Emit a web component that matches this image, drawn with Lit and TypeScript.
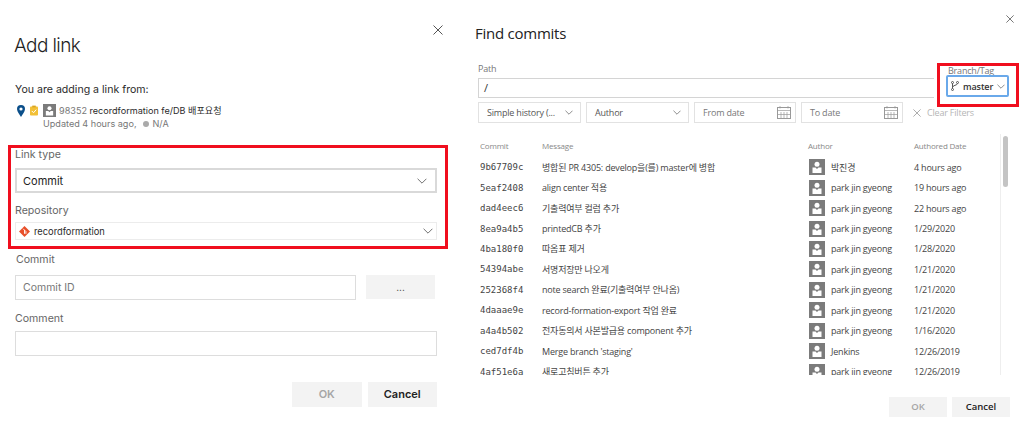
import { LitElement, html, css } from "lit";
import { customElement } from "lit/decorators.js";

const chevron = (w = 12) => html`<svg class="chev" width=${w} height=${Math.round(w * 0.6)} viewBox="0 0 12 7"><path d="M.7.8 6 6.100 11.300.8" fill="none" stroke="#555" stroke-width="1"/></svg>`;
const closeX = html`<svg width="10" height="10" viewBox="0 0 10 10"><path d="M.5.5l9 9M9.500.5l-9 9" stroke="#555" stroke-width="1" fill="none"/></svg>`;
const avatar = (s: number) => html`<svg class="avatar" width=${s} height=${s} viewBox="0 0 16 16"><rect width="16" height="16" fill="#7b7b7b"/><circle cx="8" cy="5.200" r="2.500" fill="#fff"/><path d="M3.500 8.600h3l1.500 1.400 1.500-1.400h3V14h-9z" fill="#fff"/></svg>`;
const calendar = html`<svg width="14" height="13" viewBox="0 0 14 13" fill="none" stroke="#999" stroke-width="1"><rect x=".5" y="1.500" width="13" height="11"/><path d="M.5 4.500h13M3 0v2.500M11 0v2.500M4 6v6M7 6v6M10 6v6M1 8.500h12" stroke-width=".7"/></svg>`;

const rows: [string, string, string, string][] = [
  ["9b67709c", "병합된 PR 4305: develop을(를) master에 병합", "박진경", "4 hours ago"],
  ["5eaf2408", "align center 적용", "park jin gyeong", "19 hours ago"],
  ["dad4eec6", "기출력여부 컬럼 추가", "park jin gyeong", "22 hours ago"],
  ["8ea9a4b5", "printedCB 추가", "park jin gyeong", "1/29/2020"],
  ["4ba180f0", "따옴표 제거", "park jin gyeong", "1/28/2020"],
  ["54394abe", "서명저장만 나오게", "park jin gyeong", "1/21/2020"],
  ["252368f4", "note search 완료(기출력여부 안나옴)", "park jin gyeong", "1/21/2020"],
  ["4daaae9e", "record-formation-export 작업 완료", "park jin gyeong", "1/21/2020"],
  ["a4a4b502", "전자동의서 사본발급용 component 추가", "park jin gyeong", "1/16/2020"],
  ["ced7df4b", "Merge branch 'staging'", "Jenkins", "12/26/2019"],
  ["4af51e6a", "새로고침버튼 추가", "park jin gyeong", "12/26/2019"],
];

@customElement("app-root")
export class AppRoot extends LitElement {
  static styles = css`
    :host { display: block; width: 1035px; height: 423px; position: relative; overflow: hidden; background: #fff; color: #2b2b2b; }
    * { box-sizing: border-box; }
    .page { display: flex; height: 423px; }
    .left { width: 460px; padding: 0 0 0 15px; font-family: "Inter", "Noto Sans CJK KR", sans-serif; font-size: 10.5px; position: relative; }
    .right { flex: 1; padding-left: 15px; font-family: "Open Sans", "Noto Sans CJK KR", sans-serif; font-size: 9px; letter-spacing: -.2px; position: relative; }
    .close { position: absolute; line-height: 0; }
    .left .close { left: 433px; top: 25px; }
    .right .close { left: 546px; top: 15px; width: 8px; }
    .right .close svg { width: 8px; height: 8px; }
    h1 { margin: 0; font-weight: 400; color: #222; }
    .left h1 { font-size: 19px; font-weight: 300; line-height: 26px; padding-top: 33px; margin-left: -1px; letter-spacing: -.6px; }
    .from { margin-top: 24px; font-size: 10.6px; line-height: 14px; }
    .item { display: flex; margin-top: 7px; }
    .item-icons { display: flex; align-items: center; height: 13px; }
    .pin { margin: 0 5px 0 2px; }
    .clip { margin-right: 5px; }
    .item-text { line-height: 13px; font-size: 9.1px; }
    .item-main { display: flex; align-items: center; gap: 3px; height: 13px; }
    .muted { color: #777; }
    .item-sub { display: flex; align-items: center; color: #777; }
    .dot { width: 6px; height: 6px; border-radius: 50%; background: #aaa; margin: 0 4px 0 6px; }
    .lab { color: #666; font-size: 10.6px; line-height: 14px; }
    .lab-type { margin-top: 18px; }
    .lab-repo { margin-top: 11px; }
    .lab-commit { margin-top: 13px; padding-left: 1px; }
    .lab-comment { margin-top: 12px; }
    .sel { display: flex; align-items: center; justify-content: space-between; width: 422px; border: 1px solid #ddd; background: #fff; }
    .sel.type { height: 25px; margin-top: 6px; padding: 0 8px 0 6px; font-size: 11px; color: #222; border: 2px solid #d9d9d9; }
    .sel.repo { height: 18px; margin-top: 4px; padding: 0 3px 0 3px; border-color: #ececec; }
    .repo-name { display: flex; align-items: center; gap: 4px; font-size: 9.3px; }
    .inrow { display: flex; gap: 10px; margin-top: 8px; }
    .inp { height: 25px; border: 1px solid #ddd; display: flex; align-items: center; padding-left: 7px; color: #777; }
    .inp.id { width: 341px; }
    .dots { width: 69px; height: 24px; background: #f3f3f3; text-align: center; line-height: 24px; color: #444; font-size: 10px; }
    .inp.comment { width: 422px; margin-top: 5px; }
    .actions { display: flex; justify-content: flex-end; }
    .left .actions { width: 422px; gap: 6px; margin-top: 26px; }
    .left .btn { width: 69.5px; height: 25px; line-height: 25px; font-size: 11px; }
    .btn { background: #f3f3f3; text-align: center; font-weight: 600; color: #222; }
    .btn.off { color: #a6a6a6; }
    .right h1 { font-size: 15px; line-height: 20px; padding-top: 23px; letter-spacing: -.25px; }
    .path-row { display: flex; margin-top: 14px; padding-left: 3px; }
    .path-col { width: 456px; }
    .plab { color: #777; font-size: 9px; line-height: 12px; margin-top: 6px; }
    .path { height: 20px; margin-top: 3px; border: 1px solid #d4d4d4; padding-left: 5px; line-height: 18px; font-size: 11px; color: #333; border-right: 0; }
    .branch-col { position: relative; margin-left: 12px; width: 63px; }
    .branch-lab { position: absolute; left: 2px; top: 8px; color: #777; font-size: 9px; line-height: 12px; white-space: nowrap; }
    .branch { position: absolute; left: 0; top: 18px; width: 63px; height: 22px; border: 2px solid #6aa9ea; border-radius: 2px; display: flex; align-items: center; gap: 4px; padding-left: 3px; color: #333; font-size: 9px; font-weight: 600; letter-spacing: -.1px; }
    .filters { display: flex; gap: 5px; margin-top: 4px; padding-left: 3px; height: 21px; }
    .f { border: 1px solid #e2e2e2; display: flex; align-items: center; justify-content: space-between; padding: 0 7px 0 8px; color: #555; width: 103px; }
    .f.date { width: 102px; color: #777; padding-right: 4px; }
    .clear { display: flex; align-items: center; gap: 6px; color: #b5b5b5; margin-left: 5px; }
    .clear svg { width: 8px; height: 8px; opacity: .6; }
    .tablewrap { display: flex; margin-top: 11px; padding-left: 5px; height: 241px; }
    .table { width: 520px; overflow: hidden; }
    .g { display: grid; grid-template-columns: 62px 266px 106px 1fr; align-items: center; }
    .head { height: 23px; color: #888; font-size: 8px; }
    .row { height: 20.45px; color: #444; white-space: nowrap; }
    .hash { font-family: "DejaVu Sans Mono", monospace; font-size: 9px; color: #444; letter-spacing: 0; }
    .author { display: flex; align-items: center; gap: 6px; padding-left: 1px; }
    .avatar { flex: none; }
    .scroll { width: 10px; border-left: 1px solid #eee; padding: 2px 0 0 2px; }
    .thumb { width: 5px; height: 51px; background: #c4c4c4; border-radius: 3px; }
    .right .actions { width: 535px; gap: 5px; margin-top: 22px; }
    .right .btn { width: 58px; height: 20px; line-height: 20px; font-size: 9.5px; letter-spacing: 0; }
    .mark { position: absolute; border: 3px solid #f00e1e; pointer-events: none; }
    .m1 { left: 8px; top: 145px; width: 440px; height: 104px; }
    .m2 { left: 937px; top: 63px; width: 82px; height: 44px; }
  `;

  render() {
    return html`
      <div class="page">
        <section class="left">
          <div class="close">${closeX}</div>
          <h1>Add link</h1>
          <div class="from">You are adding a link from:</div>
          <div class="item">
            <div class="item-icons">
              <svg class="pin" width="8" height="12" viewBox="0 0 8 12"><path fill-rule="evenodd" d="M4 0a4 4 0 0 1 4 4c0 2.500-2.500 5.500-4 8C2.500 9.500 0 6.500 0 4a4 4 0 0 1 4-4zm0 2.400a1.600 1.600 0 1 0 0 3.200 1.600 1.600 0 0 0 0-3.200z" fill="#0b4f8a"/></svg>
              <svg class="clip" width="8" height="11" viewBox="0 0 9 11"><rect y="1" width="9" height="10" rx="1" fill="#f2c037"/><rect x="2.500" width="4" height="2" fill="#d9a520"/><path d="M2 6l2 2 3-3.500" stroke="#fff" fill="none" stroke-width="1.100"/></svg>
            </div>
            <div class="item-text">
              <div class="item-main">${avatar(13)}<span><span class="muted">98352</span> recordformation fe/DB 배포요청</span></div>
              <div class="item-sub">Updated 4 hours ago,<span class="dot"></span>N/A</div>
            </div>
          </div>
          <div class="lab lab-type">Link type</div>
          <div class="sel type">Commit ${chevron(10)}</div>
          <div class="lab lab-repo">Repository</div>
          <div class="sel repo">
            <div class="repo-name">
              <svg width="11" height="11" viewBox="0 0 12 12"><path d="M6 0l6 6-6 6-6-6z" fill="#e8502a"/><path d="M4.500 3l3 3v2.500M6 4.500v4" stroke="#fff" stroke-width="1" fill="none"/></svg>
              recordformation
            </div>
            ${chevron(10)}
          </div>
          <div class="lab lab-commit">Commit</div>
          <div class="inrow">
            <div class="inp id">Commit ID</div>
            <div class="dots">...</div>
          </div>
          <div class="lab lab-comment">Comment</div>
          <div class="inp comment"></div>
          <div class="actions">
            <div class="btn off">OK</div>
            <div class="btn">Cancel</div>
          </div>
        </section>
        <section class="right">
          <div class="close">${closeX}</div>
          <h1>Find commits</h1>
          <div class="path-row">
            <div class="path-col">
              <div class="plab">Path</div>
              <div class="path">/</div>
            </div>
            <div class="branch-col">
              <div class="branch-lab">Branch/Tag</div>
              <div class="branch">
                <svg width="8" height="10" viewBox="0 0 8 10" fill="none" stroke="#555"><circle cx="1.500" cy="1.500" r="1"/><circle cx="1.500" cy="8.500" r="1"/><circle cx="6.500" cy="1.500" r="1"/><path d="M1.500 2.500v5M6.500 2.500c0 2-5 1.500-5 4"/></svg>
                master ${chevron(8)}
              </div>
            </div>
          </div>
          <div class="filters">
            <div class="f">Simple history (... ${chevron(8)}</div>
            <div class="f">Author ${chevron(8)}</div>
            <div class="f date">From date ${calendar}</div>
            <div class="f date">To date ${calendar}</div>
            <div class="clear">${closeX} Clear Filters</div>
          </div>
          <div class="tablewrap">
            <div class="table">
              <div class="g head"><span>Commit</span><span>Message</span><span>Author</span><span>Authored Date</span></div>
              ${rows.map(r => html`<div class="g row"><span class="hash">${r[0]}</span><span>${r[1]}</span><span class="author">${avatar(16)}${r[2]}</span><span>${r[3]}</span></div>`)}
            </div>
            <div class="scroll"><div class="thumb"></div></div>
          </div>
          <div class="actions">
            <div class="btn off">OK</div>
            <div class="btn">Cancel</div>
          </div>
        </section>
      </div>
      <div class="mark m1"></div>
      <div class="mark m2"></div>
    `;
  }
}
